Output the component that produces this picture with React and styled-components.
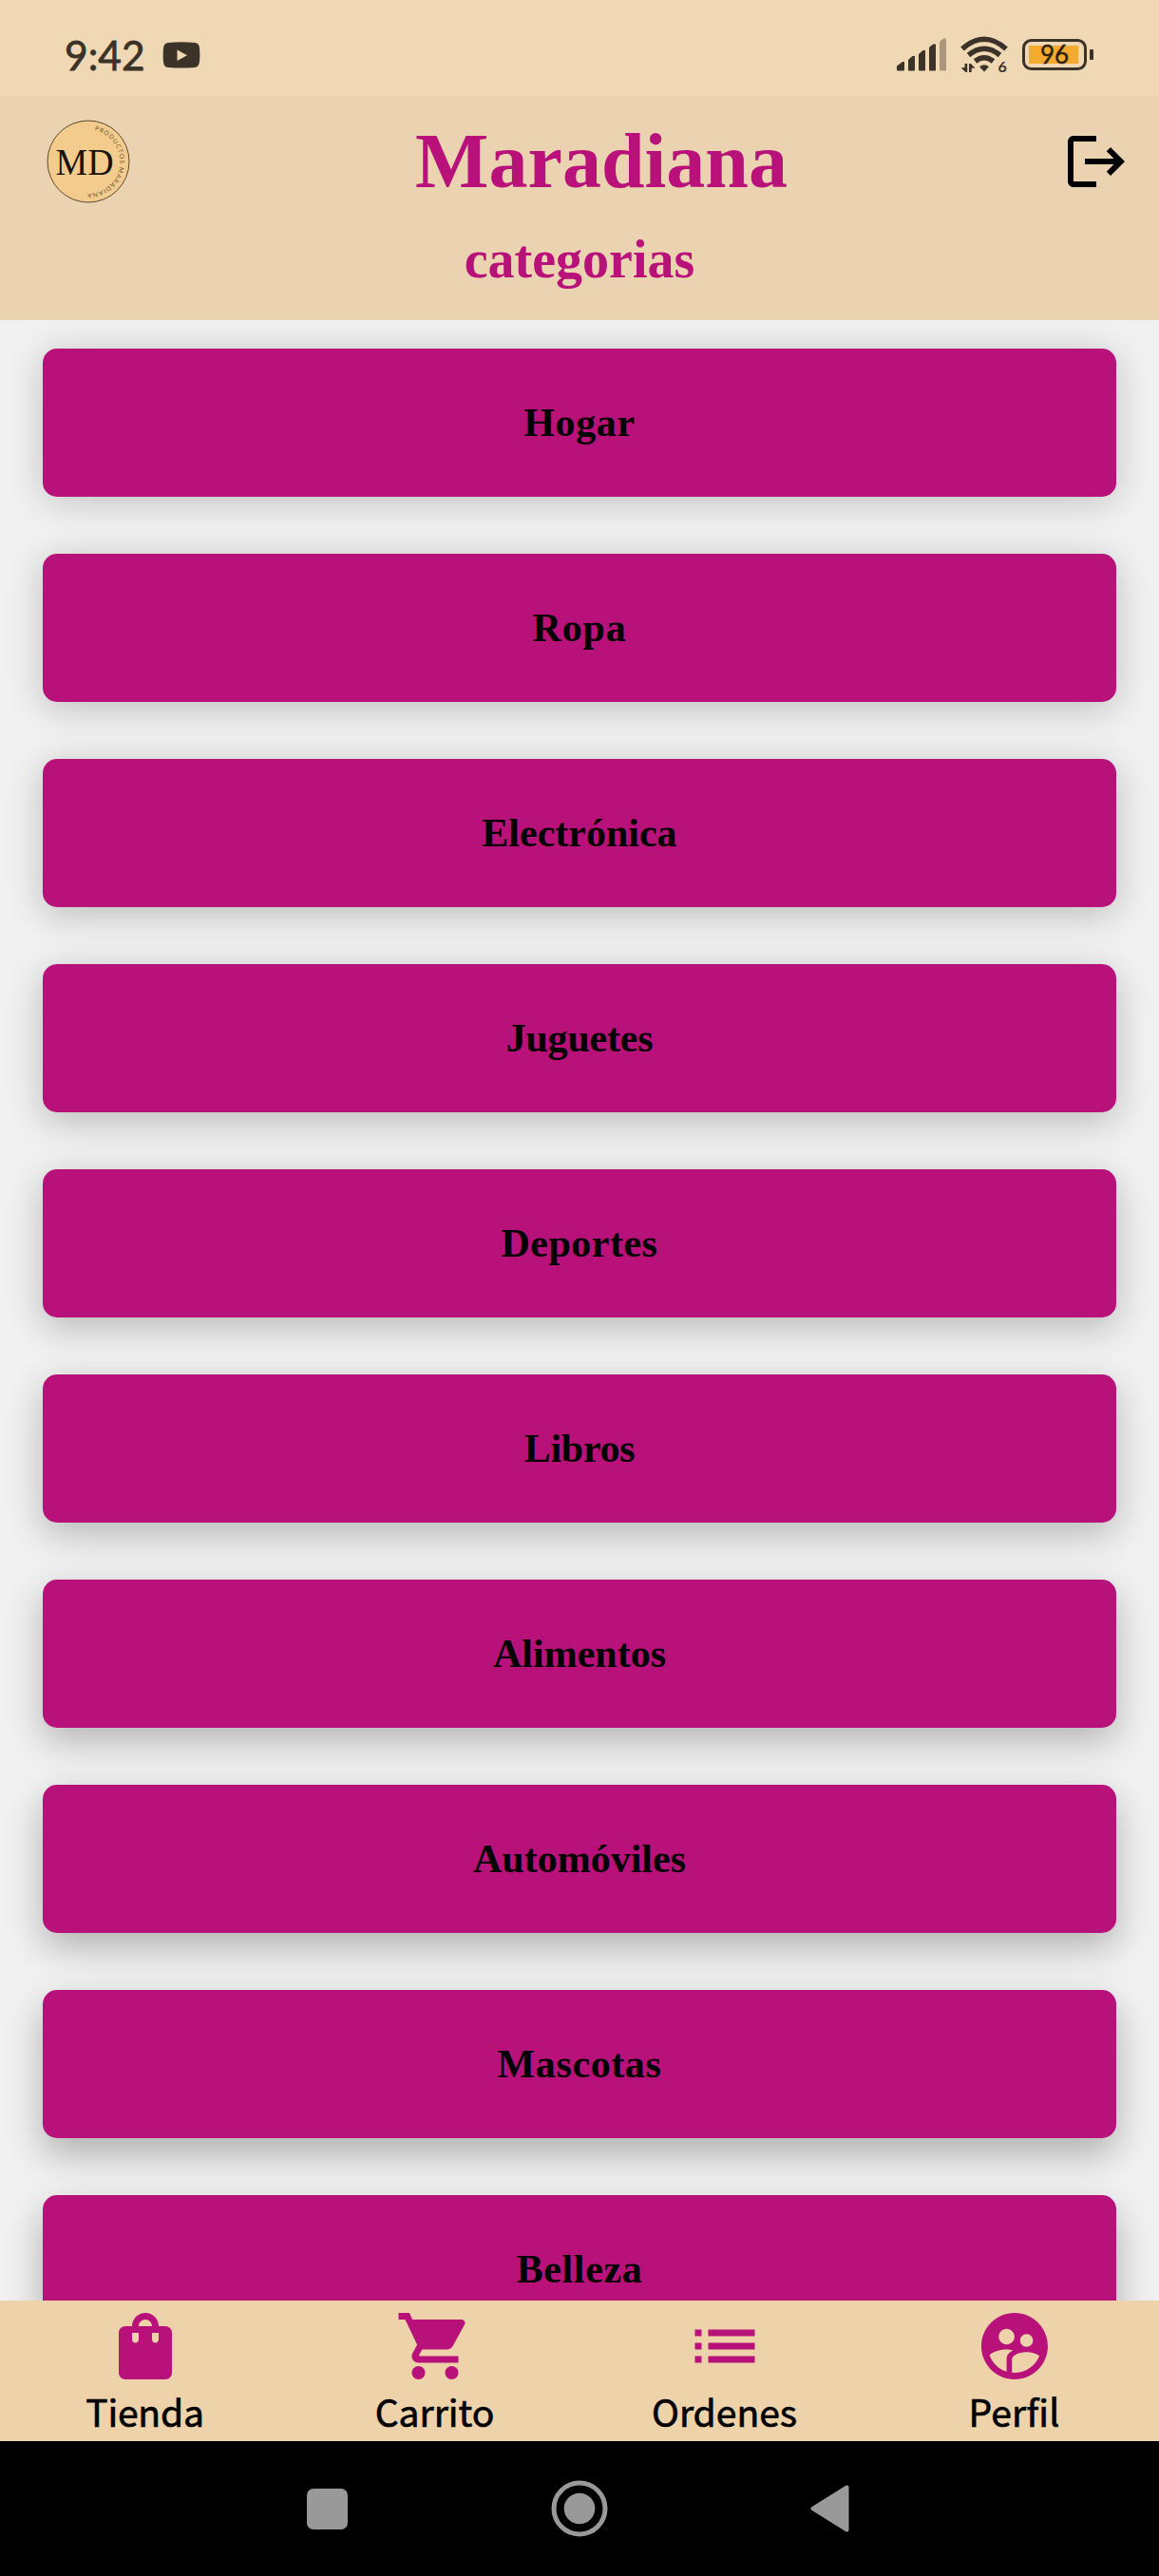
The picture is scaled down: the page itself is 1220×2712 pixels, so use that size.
import React from "react";
import styled, { createGlobalStyle } from "styled-components";
import {
  MdLogout,
  MdShoppingBag,
  MdShoppingCart,
  MdList,
  MdSupervisedUserCircle,
} from "react-icons/md";

const pink = "#b8117a";
const ink = "#3b3328";

const GlobalStyle = createGlobalStyle`
  * { box-sizing: border-box; }
  body { margin: 0; background: #000; }
`;

const Screen = styled.div`
  width: 1220px;
  height: 2712px;
  display: flex;
  flex-direction: column;
  overflow: hidden;
  background: #f1f1f1;
`;

const StatusBar = styled.div`
  flex: none;
  height: 101px;
  padding: 15px 68px 0 68px;
  display: flex;
  align-items: center;
  justify-content: space-between;
  background: #f0d8b4;
`;

const StatusGroup = styled.div`
  display: flex;
  align-items: center;
  gap: ${(p) => p.$gap}px;
`;

const Clock = styled.span`
  font: 400 42.5px/50px Lato, sans-serif;
  color: ${ink};
  -webkit-text-stroke: 0.8px ${ink};
`;

const Header = styled.header`
  flex: none;
  height: 236px;
  background: #ebd3b1;
`;

const HeaderRow = styled.div`
  height: 137px;
  padding: 0 30px 0 49px;
  display: flex;
  align-items: center;
  justify-content: space-between;
`;

const Title = styled.h1`
  margin: 0;
  padding-left: 11px;
  font: 700 82px/100px "Liberation Serif", serif;
  color: ${pink};
`;

const Subtitle = styled.h2`
  margin: 0;
  text-align: center;
  font: 700 56px/70px "Liberation Serif", serif;
  color: ${pink};
`;

const CategoryList = styled.main`
  flex: 1;
  min-height: 0;
  overflow: hidden;
  padding: 30px 45px 0;
  display: flex;
  flex-direction: column;
  gap: 60px;
`;

const Category = styled.div`
  flex: none;
  height: 156px;
  border-radius: 15px;
  display: flex;
  align-items: center;
  justify-content: center;
  background: ${pink};
  color: #000;
  font: 700 42px/50px "Liberation Serif", serif;
  letter-spacing: ${(p) => p.$tracking}px;
  box-shadow: 0 ${(p) => 5 + p.$depth * 1.4}px 38px
    rgba(0, 0, 0, ${(p) => 0.2 + p.$depth * 0.009});
`;

const TabBar = styled.nav`
  flex: none;
  height: 148px;
  display: grid;
  grid-template-columns: repeat(4, 1fr);
  background: #eed3aa;
`;

const Tab = styled.div`
  display: flex;
  flex-direction: column;
  align-items: center;
  padding-top: 6px;
  color: ${pink};
`;

const TabLabel = styled.span`
  margin-top: -1px;
  font: 400 39px/54px "Noto Sans CJK SC", sans-serif;
  -webkit-text-stroke: 0.7px #000;
  letter-spacing: ${(p) => p.$tracking}px;
  color: #000;
`;

const SystemBar = styled.div`
  flex: none;
  height: 142px;
  padding: 0 326px 0 323px;
  display: flex;
  align-items: center;
  justify-content: space-between;
  background: #000;
`;

const SquareKey = styled.div`
  width: 43px;
  height: 43px;
  border-radius: 7px;
  background: #999;
`;

const categories = [
  ["Hogar", 0.6],
  ["Ropa", 0.8],
  ["Electrónica", 0],
  ["Juguetes", -0.2],
  ["Deportes", 0.5],
  ["Libros", -0.3],
  ["Alimentos", 0],
  ["Automóviles", 0],
  ["Mascotas", 0.6],
  ["Belleza", 0.6],
];

const tabs = [
  ["Tienda", MdShoppingBag, -0.2],
  ["Carrito", MdShoppingCart, 0],
  ["Ordenes", MdList, 0],
  ["Perfil", MdSupervisedUserCircle, 0.2],
];

const VideoBadge = () => (
  <svg width="40" height="28" viewBox="0 0 40 28">
    <path
      d="M6 1Q20-.5 34 1q5 .6 5 6 .7 7 0 14-.6 5.400-5 6-14 1.200-28 0-5-.6-5-6-.7-7 0-14 .4-5.400 5-6z"
      fill={ink}
    />
    <path d="M15.500 8.500v11.500l10.500-5.700z" fill="#f0d8b4" />
  </svg>
);

const Signal = () => (
  <svg width="52" height="36" viewBox="0 0 52 36" fill={ink}>
    <path d="M0 29.500l6-4.500h2v8.500q0 1-1 1H1q-1 0-1-1z" />
    <path d="M12 23l4.500-4H19v14.500q0 1-1 1h-5q-1 0-1-1z" />
    <path d="M23 17l4.500-4H30v20.500q0 1-1 1h-5q-1 0-1-1z" />
    <path d="M34 10l4-3.500h3v27q0 1-1 1h-5q-1 0-1-1z" />
    <path d="M45 4l4-3.500h3v33q0 1-1 1h-5q-1 0-1-1z" fill="#aa967b" />
  </svg>
);

const Wifi = () => (
  <svg width="50" height="44" viewBox="0 -2 50 44">
    <g fill="none" stroke={ink} strokeWidth="5.500">
      <path d="M2 13.500Q25-7 48 13.500" />
      <path d="M8.500 20Q25 6.500 41.500 20" />
      <path d="M15.500 26.500q9.500-7.500 19 0" />
    </g>
    <path d="M20 32.200q5-4 10 0L25 37.500z" fill={ink} />
    <path d="M4.500 29h2.700v9H5.500L.5 33.300h4z" fill={ink} />
    <path d="M9 29h2l4.500 4.700h-3.800V38H9z" fill={ink} />
    <text x="39.500" y="38" fontFamily="Lato, sans-serif" fontWeight="700" fontSize="16" fill={ink}>
      6
    </text>
  </svg>
);

const Battery = () => (
  <svg width="76" height="34" viewBox="0 0 76 34">
    <rect x="1.500" y="1.500" width="65" height="30" rx="8" fill="none" stroke={ink} strokeWidth="3" />
    <rect x="7" y="7" width="52" height="19" fill="#f5aa2d" />
    <rect x="71" y="11" width="4" height="11" rx="1" fill={ink} />
    <text
      x="34"
      y="26"
      textAnchor="middle"
      fontFamily="Lato, sans-serif"
      fontSize="26"
      fill="#2a2010"
      stroke="#2a2010"
      strokeWidth=".4"
    >
      96
    </text>
  </svg>
);

const Logo = () => (
  <svg width="88" height="88" viewBox="0 0 88 88">
    <defs>
      <path id="logo-arc" d="M50.500 11.200A33.500 33.500 0 0 1 41 77.400" />
    </defs>
    <circle cx="44" cy="44" r="43" fill="#f3cc8d" stroke="#4a3a22" strokeWidth=".9" />
    <text
      x="9.500"
      y="57.500"
      fontFamily="'Liberation Serif', serif"
      fontSize="41"
      textLength="61"
      lengthAdjust="spacingAndGlyphs"
      fill="#17140c"
    >
      MD
    </text>
    <text fontFamily="Lato, sans-serif" fontSize="6.500" fill="#6b5431">
      <textPath href="#logo-arc" textLength="99">
        PRODUCTOS MARADIANA
      </textPath>
    </text>
  </svg>
);

const HomeKey = () => (
  <svg width="60" height="60" viewBox="0 0 60 60">
    <circle cx="30" cy="30" r="27" fill="none" stroke="#999" strokeWidth="5" />
    <circle cx="30" cy="30" r="16.300" fill="#999" />
  </svg>
);

const BackKey = () => (
  <svg width="41" height="50" viewBox="0 0 41 50">
    <path d="M2.500 25L38.500 2.500v45z" fill="#999" stroke="#999" strokeWidth="4" strokeLinejoin="round" />
  </svg>
);

export default function App() {
  return (
    <Screen>
      <GlobalStyle />
      <StatusBar>
        <StatusGroup $gap={18}>
          <Clock>9:42</Clock>
          <VideoBadge />
        </StatusGroup>
        <StatusGroup $gap={15}>
          <Signal />
          <Wifi />
          <Battery />
        </StatusGroup>
      </StatusBar>
      <Header>
        <HeaderRow>
          <Logo />
          <Title>Maradiana</Title>
          <MdLogout size={72} color="#000" />
        </HeaderRow>
        <Subtitle>categorias</Subtitle>
      </Header>
      <CategoryList>
        {categories.map(([name, tracking], i) => (
          <Category key={name} $tracking={tracking} $depth={i}>
            {name}
          </Category>
        ))}
      </CategoryList>
      <TabBar>
        {tabs.map(([name, Icon, tracking]) => (
          <Tab key={name}>
            <Icon size={84} />
            <TabLabel $tracking={tracking}>{name}</TabLabel>
          </Tab>
        ))}
      </TabBar>
      <SystemBar>
        <SquareKey />
        <HomeKey />
        <BackKey />
      </SystemBar>
    </Screen>
  );
}
